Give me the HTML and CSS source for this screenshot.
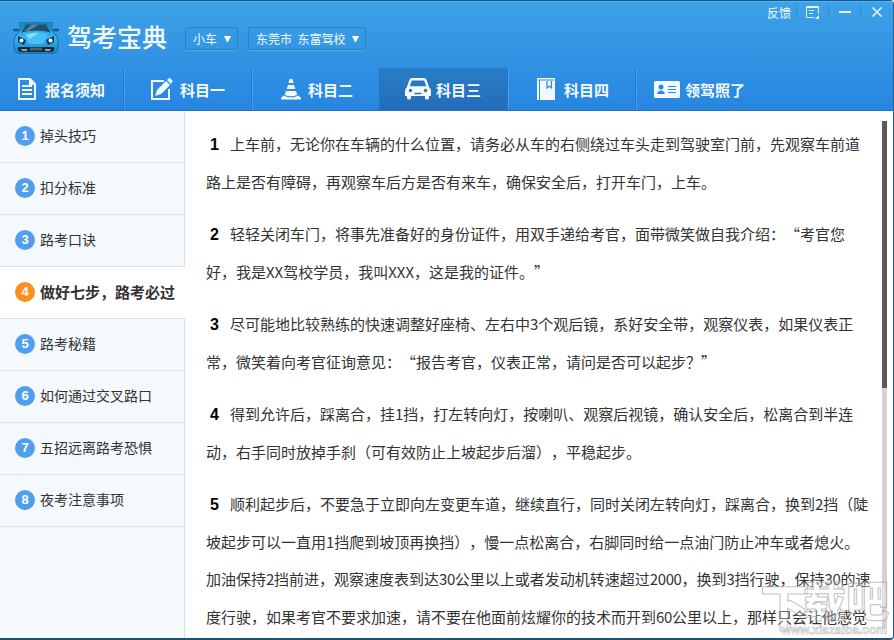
FILE: index.html
```html
<!DOCTYPE html>
<html lang="zh-CN">
<head>
  <meta charset="UTF-8">
  <meta name="viewport" content="width=device-width, initial-scale=1.0">
  <title>驾考宝典</title>
  <link rel="stylesheet" href="styles.css">
</head>
<body>
  <div class="window">
    <header class="header">
      <div class="top">
        <svg class="logo" width="48" height="34" viewBox="0 0 48 34">
          <defs>
            <linearGradient id="carBody" x1="0" y1="0" x2="0" y2="1">
              <stop offset="0" stop-color="#1d9fe0"/>
              <stop offset="0.5" stop-color="#35b4f2"/>
              <stop offset="1" stop-color="#1480c6"/>
            </linearGradient>
          </defs>
          <path d="M1 9h6M41 9h6" stroke="#1d5c8c" stroke-width="2.500"/>
          <path d="M7.500 1.500h33l-1 9h-31z" fill="#1e93d4" stroke="#1878b4"/>
          <path d="M13 3h22l8 10q3 3 3 7v8q0 4-6 4.500H8Q2 32 2 28v-8q0-4 3-7z" fill="url(#carBody)" stroke="#1272b0"/>
          <path d="M14 3.500h20l5 8q-15-4-30 0z" fill="#20506c"/>
          <path d="M20 3.500h7l-10 6-5 .500z" fill="#5c8499"/>
          <path d="M12 13q12-4 24 0l-5 10H17z" fill="#48bff8"/>
          <path d="M14 14q5-2 12-2l-8 6z" fill="#8fdcff"/>
          <path d="M6 15l8 4-2 5-6-3zM42 15l-8 4 2 5 6-3z" fill="#1b3447"/>
          <circle cx="9.500" cy="19.500" r="2" fill="#fff"/>
          <circle cx="38.500" cy="19.500" r="2" fill="#fff"/>
          <path d="M7 26h34q2 0 1 3-1 2-3 2H9q-2 0-3-2-1-3 1-3z" fill="#182a36"/>
          <path d="M9 28h6v2h-5zM33 28h6l-1 2h-5z" fill="#96a3aa"/>
          <path d="M18 26.500h12v3H18z" fill="#4d5f6b"/>
        </svg>
        <h1 class="title">驾考宝典</h1>
        <div class="select">小车<i class="arrow"></i></div>
        <div class="select">东莞市&nbsp; 东富驾校<i class="arrow"></i></div>
        <div class="controls">
          <span class="feedback">反馈</span>
          <span class="control">
            <svg width="14" height="13" viewBox="0 0 14 13" fill="none" stroke="#e4f3fd">
              <path d="M8.500 11.500H.5V.5h12v7M.5 1.500h12M3 4.500h5M3 7.500h4"/>
              <path d="M13 9v4H9z" fill="#e4f3fd" stroke="none"/>
            </svg>
          </span>
          <span class="control">
            <svg width="12" height="12" viewBox="0 0 12 12"><path d="M0 6h12" stroke="#e4f3fd" stroke-width="2"/></svg>
          </span>
          <span class="control">
            <svg width="12" height="12" viewBox="0 0 12 12"><path d="M1.500 1.500l9 9M10.500 1.500l-9 9" stroke="#e4f3fd" stroke-width="1.600"/></svg>
          </span>
        </div>
      </div>

      <nav class="nav">
        <a class="tab tab-first">
          <svg width="18" height="22" viewBox="0 0 18 22" fill="none" stroke="#f3faff" stroke-width="2">
            <path d="M1 1h11l5 5v15H1z"/>
            <path d="M4 8h10M4 12h10M4 16h10"/>
            <path d="M11 1l6 6h-6z" fill="#f3faff" stroke="none"/>
          </svg>
          <span>报名须知</span>
        </a>
        <a class="tab">
          <svg width="23" height="23" viewBox="0 0 23 23">
            <path d="M14 3H2v18h17V11" fill="none" stroke="#f3faff" stroke-width="2"/>
            <path d="M5 18l2-6L16 3l4 4-9 9zM17 2l1.500-1.500q1-.8 2 0L22 2q1 1 0 2.200L21 6z" fill="#f3faff"/>
          </svg>
          <span>科目一</span>
        </a>
        <a class="tab tab-cone">
          <svg width="20" height="21" viewBox="0 0 20 21" fill="#f3faff">
            <path d="M8.500 0h3l1 4h-5zM7 6h6l1.300 4H5.700zM5 12h10l1.300 4q-6.300 2.500-12.600 0z"/>
            <path d="M2.500 16.500q7.500 4 15 0L20 19v1.500H0V19z"/>
          </svg>
          <span>科目二</span>
        </a>
        <a class="tab tab-car active">
          <svg width="26" height="22" viewBox="0 0 26 22">
            <path d="M7 1.200h12q1 0 1.500 1.300L23 9.500H3l2.500-7Q6 1.200 7 1.200z" fill="none" stroke="#f3faff" stroke-width="2.400"/>
            <path d="M3 9h20q3 1 3 4v5h-2v2q0 1.500-2 1.500T20 20v-2H6v2q0 1.500-2 1.500T2 20v-2H0v-5q0-3 3-4z" fill="#f3faff"/>
            <circle cx="5.500" cy="12.500" r="1.700" fill="#2673be"/>
            <circle cx="20.500" cy="12.500" r="1.700" fill="#2673be"/>
            <path d="M9.500 15.500h7" stroke="#2673be" stroke-width="1.500"/>
          </svg>
          <span>科目三</span>
        </a>
        <a class="tab tab-book">
          <svg width="18" height="22" viewBox="0 0 18 22">
            <path d="M0 0h18v22H0z" fill="#f3faff"/>
            <path d="M2.500 22V2.500M1 2h16" stroke="#2d89df"/>
            <path d="M10 3v7l2.200-2 2.300 2V3" fill="#f3faff" stroke="#2d89df" stroke-width="1.200"/>
          </svg>
          <span>科目四</span>
        </a>
        <a class="tab tab-card">
          <svg width="26" height="17" viewBox="0 0 26 17">
            <rect width="26" height="17" rx="1.500" fill="#f3faff"/>
            <circle cx="7" cy="6" r="2.500" fill="#2d86dc"/>
            <path d="M3 13q0-2 3-3.500h2q3 1.500 3 3.500z" fill="#2d86dc"/>
            <path d="M14 5.500h8M14 8.500h8M14 11.500h8" stroke="#2d86dc"/>
          </svg>
          <span>领驾照了</span>
        </a>
      </nav>
    </header>

    <div class="main">
      <ul class="sidebar">
        <li><b>1</b>掉头技巧</li>
        <li><b>2</b>扣分标准</li>
        <li><b>3</b>路考口诀</li>
        <li class="current"><b>4</b>做好七步，路考必过</li>
        <li><b>5</b>路考秘籍</li>
        <li><b>6</b>如何通过交叉路口</li>
        <li><b>7</b>五招远离路考恐惧</li>
        <li><b>8</b>夜考注意事项</li>
      </ul>

      <div class="content">
        <p><b>1</b>上车前，无论你在车辆的什么位置，请务必从车的右侧绕过车头走到驾驶室门前，先观察车前道<br>路上是否有障碍，再观察车后方是否有来车，确保安全后，打开车门，上车。</p>
        <p><b>2</b>轻轻关闭车门，将事先准备好的身份证件，用双手递给考官，面带微笑做自我介绍：<q>“</q>考官您<br>好，我是XX驾校学员，我叫XXX，这是我的证件。”</p>
        <p><b>3</b>尽可能地比较熟练的快速调整好座椅、左右中3个观后镜，系好安全带，观察仪表，如果仪表正<br>常，微笑着向考官征询意见：<q>“</q>报告考官，仪表正常，请问是否可以起步？”</p>
        <p><b>4</b>得到允许后，踩离合，挂1挡，打左转向灯，按喇叭、观察后视镜，确认安全后，松离合到半连<br>动，右手同时放掉手刹（可有效防止上坡起步后溜），平稳起步。</p>
        <p><b>5</b>顺利起步后，不要急于立即向左变更车道，继续直行，同时关闭左转向灯，踩离合，换到2挡（陡<br>坡起步可以一直用1挡爬到坡顶再换挡），慢一点松离合，右脚同时给一点油门防止冲车或者熄火。<br>加油保持<span class="num">2</span>挡前进，观察速度表到达<span class="num">30</span>公里以上或者发动机转速超过<span class="num">2000</span>，换到<span class="num">3</span>挡行驶，保持<span class="num">30</span>的速<br>度行驶，如果考官不要求加速，请不要在他面前炫耀你的技术而开到<span class="num">60</span>公里以上，那样只会让他感觉</p>
      </div>
      <div class="scrollbar"><div class="thumb"></div></div>
    </div>

    <div class="watermark">
      <div class="mark"><span class="big">下</span><span>载吧</span></div>
      <div class="url">www.xiazaiba.com</div>
    </div>
  </div>
</body>
</html>
```

FILE: styles.css
```css
* {
  box-sizing: border-box;
}

body {
  margin: 0;
  font-family: "Noto Sans CJK SC", sans-serif;
  color: #333;
  overflow: hidden;
}

.window {
  position: relative;
  display: flex;
  flex-direction: column;
  width: 894px;
  height: 640px;
  background: #fff;
  border-top: 1px solid #0b5a96;
  border-right: 1px solid #22618f;
  border-bottom: 2px solid #1d5379;
  border-radius: 0 4px 4px 0;
  overflow: hidden;
}

/* Header */
.header {
  height: 110px;
  flex: none;
  display: flex;
  flex-direction: column;
  background: linear-gradient(#3da2e7, #2785e0);
  border-top: 1px solid #5fb4ef;
  border-bottom: 1px solid #2573c4;
  color: #f3faff;
}

.top {
  height: 67px;
  display: flex;
  align-items: flex-start;
  padding-left: 12px;
}

.logo {
  margin-top: 19px;
}

.title {
  margin: 16px 0 0 7px;
  width: 118px;
  font-size: 25px;
  line-height: 36px;
  font-weight: 500;
}

.select {
  display: flex;
  align-items: center;
  height: 23px;
  margin-top: 25px;
  margin-right: 10px;
  padding: 0 6px 0 7px;
  font-size: 12px;
  white-space: nowrap;
  border: 1px solid #2b7fc8;
  border-radius: 3px;
  box-shadow: 0 1px 0 rgba(255, 255, 255, 0.2);
}

.arrow {
  margin-left: 7px;
  border: 3.5px solid transparent;
  border-top: 6px solid #fff;
  border-bottom: 0;
  width: 7px;
}

.controls {
  display: flex;
  margin-left: auto;
  margin-right: 1px;
  height: 20px;
}

.feedback {
  width: 29px;
  font-size: 12px;
  line-height: 22px;
}

.control {
  width: 32px;
  height: 16px;
  padding-top: 4px;
  display: flex;
  justify-content: center;
  border-left: 1px solid rgba(35, 120, 190, 0.4);
}

/* Tabs */
.nav {
  display: flex;
  height: 42px;
}

.tab {
  display: flex;
  align-items: center;
  width: 128px;
  padding-left: 26px;
  font-size: 15px;
  font-weight: bold;
  white-space: nowrap;
  border-right: 1px solid #2574c8;
  box-shadow: 1px 0 0 #4a9fea;
}

.tab svg {
  flex: none;
  margin-right: 7px;
}

.tab-first {
  width: 124px;
  padding-left: 18px;
}

.tab-first svg {
  margin-right: 9px;
}

.tab-cone {
  padding-left: 29px;
}

.tab-car {
  padding-left: 25px;
}

.tab-car svg {
  margin-right: 5px;
}

.tab-book {
  padding-left: 29px;
}

.tab-book svg {
  margin-right: 9px;
}

.tab-card {
  padding-left: 18px;
  border: none;
  box-shadow: none;
}

.tab-card svg {
  margin-right: 5px;
}

.tab.active {
  background: linear-gradient(#2a7cc6, #236dba);
}

/* Main area */
.main {
  flex: 1;
  display: flex;
  min-height: 0;
}

.sidebar {
  width: 185px;
  flex: none;
  margin: 0;
  padding: 0;
  list-style: none;
  background: #f4f9fd;
  border-right: 1px solid #d5dfe7;
}

.sidebar li {
  display: flex;
  align-items: center;
  height: 52px;
  padding-left: 15px;
  padding-bottom: 3px;
  font-size: 14px;
  white-space: nowrap;
  border-bottom: 1px solid #d9e2e9;
}

.sidebar b {
  width: 20px;
  height: 20px;
  margin-right: 5px;
  margin-top: 2px;
  border-radius: 50%;
  background: #519eec;
  color: #fff;
  font: bold 13px/20px "Liberation Sans", sans-serif;
  text-align: center;
}

.sidebar .current {
  width: 185px;
  background: #fff;
  font-size: 15px;
  font-weight: bold;
}

.sidebar .current b {
  background: #fd8f1c;
}

.content {
  flex: 1;
  padding: 14px 0 0 21px;
  overflow: hidden;
}

.content p {
  margin: 0 0 15px;
  font-size: 15px;
  line-height: 37.5px;
  white-space: nowrap;
  text-spacing-trim: space-all;
}

.content b {
  display: inline-block;
  width: 24px;
  padding-left: 4px;
  font: bold 16px/20px "Liberation Sans", sans-serif;
  color: #000;
}

.content q {
  display: inline-block;
  width: 15px;
  text-align: right;
  quotes: none;
}

.num {
  letter-spacing: -0.4px;
}

.scrollbar {
  width: 5px;
  flex: none;
  margin: 10px 6px 10px 0;
  background: #d3d3d3;
}

.thumb {
  height: 267px;
  background: #5a5a5a;
}

/* Watermark */
.watermark {
  position: absolute;
  right: 4px;
  bottom: 0;
  width: 126px;
  height: 64px;
  opacity: 0.6;
  color: rgba(255, 255, 255, 0.5);
}

.mark {
  display: flex;
  font-size: 43px;
  font-weight: 900;
  line-height: 48px;
  -webkit-text-stroke: 1px #999;
}

.mark .big {
  width: 40px;
  font-size: 50px;
  line-height: 60px;
  margin-left: -3px;
  margin-right: 3px;
}

.url {
  position: absolute;
  right: 2px;
  bottom: 0;
  font: bold 12px/15px "Liberation Sans", sans-serif;
  color: #fff;
  -webkit-text-stroke: 0.6px #888;
}
```
